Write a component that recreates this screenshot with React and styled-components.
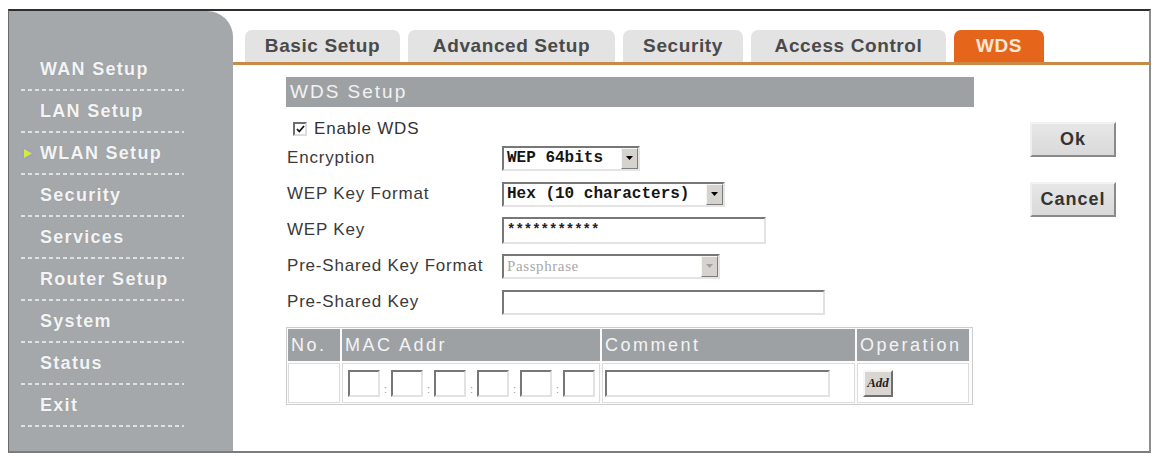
import React from 'react';
import styled, { createGlobalStyle } from 'styled-components';

const GlobalStyle = createGlobalStyle`
  html, body { margin: 0; padding: 0; background: #fff; }
  body { font-family: "Liberation Sans", Arial, sans-serif; }
`;

const Frame = styled.div`
  box-sizing: border-box;
  margin: 9px 0 0 8px;
  width: 1143px;
  height: 444px;
  display: flex;
  background: #fff;
  border-top: 2px solid #2e2e2e;
  border-left: 1px solid #6a6a6a;
  border-right: 2px solid #8e8e8e;
  border-bottom: 2px solid #7c7c7c;
`;

/* ---------- left menu ---------- */
const Sidebar = styled.nav`
  box-sizing: border-box;
  flex: none;
  width: 224px;
  padding-top: 38px;
  background: #a5a8ab;
  border-top-right-radius: 26px;
`;

const NavItem = styled.div`
  box-sizing: border-box;
  display: flex;
  align-items: center;
  margin-left: 12px;
  width: 163px;
  height: 42px;
  padding-bottom: 2px;
  background: repeating-linear-gradient(90deg, rgba(232, 234, 236, 0.85) 0 4px, transparent 4px 7px)
    left bottom / 100% 2px no-repeat;
`;

const MarkerSlot = styled.span`
  flex: none;
  width: 19px;
  display: flex;
  align-items: center;
  padding-left: 3px;
  box-sizing: border-box;
`;

const NavText = styled.span`
  font-size: 18px;
  font-weight: bold;
  letter-spacing: 1.3px;
  color: #f3f4f5;
  white-space: nowrap;
  text-shadow: 0 0 1px rgba(120, 120, 120, 0.5);
`;

/* ---------- tabs ---------- */
const Main = styled.div`
  flex: 1;
  display: flex;
  flex-direction: column;
  min-width: 0;
`;

const TabBar = styled.div`
  display: flex;
  align-items: flex-end;
  gap: 8px;
  padding: 19px 0 0 12px;
  border-bottom: 3px solid #c98a46;
`;

const Tab = styled.div`
  flex: none;
  width: ${(p) => p.$w}px;
  height: 32px;
  display: flex;
  align-items: center;
  justify-content: center;
  border-radius: 7px 7px 0 0;
  background: ${(p) => (p.$active ? '#e5661b' : '#e3e3e3')};
  color: ${(p) => (p.$active ? '#fbe6d8' : '#4a4a4a')};
  font-size: 19px;
  font-weight: bold;
  letter-spacing: 0.6px;
  white-space: nowrap;
`;

/* ---------- content ---------- */
const Content = styled.div`
  display: flex;
  padding: 12px 0 0 53px;
`;

const FormColumn = styled.div`
  flex: none;
  width: 688px;
  display: flex;
  flex-direction: column;
`;

const SectionHeader = styled.div`
  height: 30px;
  line-height: 30px;
  padding-left: 4px;
  background: #9ea1a4;
  color: #f1f2f3;
  font-size: 19px;
  letter-spacing: 2px;
`;

const EnableRow = styled.label`
  display: flex;
  align-items: center;
  gap: 7px;
  height: 22px;
  margin-top: 11px;
  padding-left: 7px;
  font-size: 17px;
  letter-spacing: 0.8px;
  color: #333;
`;

const CheckBox = styled.span`
  box-sizing: border-box;
  width: 14px;
  height: 14px;
  display: flex;
  align-items: center;
  justify-content: center;
  background: #fff;
  border: 2px solid;
  border-color: #6e6e6e #dcdcdc #dcdcdc #6e6e6e;
`;

const FormRow = styled.div`
  display: flex;
  align-items: center;
  height: 36px;
`;

const Label = styled.span`
  flex: none;
  width: 216px;
  padding-left: 1px;
  box-sizing: border-box;
  font-size: 17px;
  letter-spacing: 0.8px;
  color: #3a3a3a;
  white-space: nowrap;
`;

const SelectBox = styled.div`
  box-sizing: border-box;
  width: ${(p) => p.$w}px;
  height: 25px;
  display: flex;
  align-items: stretch;
  background: #fff;
  border: 2px solid;
  border-color: #777 #e4e4e4 #e4e4e4 #777;
`;

const SelectText = styled.span`
  flex: 1;
  padding-left: 3px;
  line-height: 21px;
  white-space: nowrap;
  overflow: hidden;
  font-family: ${(p) => (p.$disabled ? '"Liberation Serif", serif' : '"Liberation Mono", monospace')};
  font-size: ${(p) => (p.$disabled ? 15 : 16)}px;
  font-weight: ${(p) => (p.$disabled ? 'normal' : 'bold')};
  letter-spacing: ${(p) => (p.$disabled ? 0.6 : 0)}px;
  color: ${(p) => (p.$disabled ? '#a8a8a8' : '#151515')};
`;

const ArrowButton = styled.span`
  box-sizing: border-box;
  flex: none;
  width: 17px;
  display: flex;
  align-items: center;
  justify-content: center;
  background: #d6d3ce;
  border: 1px solid;
  border-color: #f6f6f6 #7d7d7d #7d7d7d #f6f6f6;
`;

const TextInput = styled.input`
  box-sizing: border-box;
  width: ${(p) => p.$w}px;
  height: ${(p) => p.$h || 27}px;
  margin: 0;
  padding: 0 3px;
  background: #fff;
  border: 2px solid;
  border-color: #777 #e2e2e2 #e2e2e2 #777;
  border-radius: 0;
  outline: none;
  font-family: "Liberation Mono", monospace;
  font-size: 14px;
  font-weight: bold;
  color: #222;
`;

/* ---------- WDS peer table ---------- */
const Table = styled.div`
  display: grid;
  grid-template-columns: 52px 258px 253px 112px;
  grid-template-rows: 32px 40px;
  gap: 2px;
  width: 687px;
  box-sizing: border-box;
  margin-top: 7px;
  padding: 1px;
  background: #fbfbfb;
  border: 1px solid #cdcdcd;
`;

const HeadCell = styled.div`
  background: #9ea1a4;
  color: #f3f4f5;
  font-size: 18px;
  letter-spacing: 2.5px;
  line-height: 32px;
  padding-left: 3px;
  white-space: nowrap;
  overflow: hidden;
`;

const BodyCell = styled.div`
  display: flex;
  align-items: center;
  padding-left: ${(p) => p.$pad || 0}px;
  background: #fff;
  box-shadow: inset 0 0 0 1px #dcdcdc;
`;

const MacBox = styled(TextInput)`
  width: 32px;
`;

const MacSep = styled.span`
  width: 11px;
  align-self: flex-end;
  margin-bottom: 8px;
  text-align: center;
  font-size: 11px;
  line-height: 11px;
  color: #9a9a9a;
`;

const SmallButton = styled.button`
  box-sizing: border-box;
  width: 30px;
  height: 27px;
  padding: 0;
  background: #d9d6d1;
  border: 2px solid;
  border-color: #f7f7f7 #6f6f6f #6f6f6f #f7f7f7;
  font-family: "Liberation Serif", serif;
  font-size: 13px;
  font-weight: bold;
  font-style: italic;
  color: #222;
`;

/* ---------- Ok / Cancel ---------- */
const ButtonColumn = styled.div`
  display: flex;
  flex-direction: column;
  gap: 25px;
  margin-left: 56px;
  padding-top: 45px;
`;

const ActionButton = styled.button`
  box-sizing: border-box;
  width: 86px;
  height: 35px;
  padding: 0;
  background: linear-gradient(#e7e7e7, #d9d9d9);
  border: 2px solid;
  border-color: #f3f3f3 #8a8a8a #8a8a8a #efefef;
  font-family: "Liberation Sans", Arial, sans-serif;
  font-size: 18px;
  font-weight: bold;
  letter-spacing: 1px;
  color: #333;
`;

const navItems = [
  'WAN Setup',
  'LAN Setup',
  'WLAN Setup',
  'Security',
  'Services',
  'Router Setup',
  'System',
  'Status',
  'Exit',
];

const tabs = [
  { label: 'Basic Setup', w: 155 },
  { label: 'Advanced Setup', w: 207 },
  { label: 'Security', w: 120 },
  { label: 'Access Control', w: 195 },
  { label: 'WDS', w: 90, active: true },
];

const Marker = () => (
  <svg width="8" height="9" viewBox="0 0 8 9" style={{ filter: 'drop-shadow(0 0 2px #8d8cf0)' }}>
    <polygon points="0,0 8,4.5 0,9" fill="#d6ea3c" />
  </svg>
);

const DownArrow = ({ color = '#000' }) => (
  <svg width="7" height="4" viewBox="0 0 7 4">
    <polygon points="0,0 7,0 3.5,4" fill={color} />
  </svg>
);

const Select = ({ w, value, disabled }) => (
  <SelectBox $w={w}>
    <SelectText $disabled={disabled}>{value}</SelectText>
    <ArrowButton>
      <DownArrow color={disabled ? '#a0a0a0' : '#000'} />
    </ArrowButton>
  </SelectBox>
);

export default function App() {
  return (
    <>
      <GlobalStyle />
      <Frame>
        <Sidebar>
          {navItems.map((item) => (
            <NavItem key={item}>
              <MarkerSlot>{item === 'WLAN Setup' && <Marker />}</MarkerSlot>
              <NavText>{item}</NavText>
            </NavItem>
          ))}
        </Sidebar>

        <Main>
          <TabBar>
            {tabs.map((t) => (
              <Tab key={t.label} $w={t.w} $active={t.active}>
                {t.label}
              </Tab>
            ))}
          </TabBar>

          <Content>
            <FormColumn>
              <SectionHeader>WDS Setup</SectionHeader>

              <EnableRow>
                <CheckBox>
                  <svg width="9" height="8" viewBox="0 0 9 8">
                    <path d="M1 4 L3.3 6.5 L8 1" fill="none" stroke="#111" strokeWidth="1.8" />
                  </svg>
                </CheckBox>
                Enable WDS
              </EnableRow>

              <FormRow>
                <Label>Encryption</Label>
                <Select w={138} value="WEP 64bits" />
              </FormRow>
              <FormRow>
                <Label>WEP Key Format</Label>
                <Select w={223} value="Hex (10 characters)" />
              </FormRow>
              <FormRow>
                <Label>WEP Key</Label>
                <TextInput $w={264} readOnly value="***********" />
              </FormRow>
              <FormRow>
                <Label>Pre-Shared Key Format</Label>
                <Select w={218} value="Passphrase" disabled />
              </FormRow>
              <FormRow>
                <Label>Pre-Shared Key</Label>
                <TextInput $w={323} $h={25} readOnly value="" />
              </FormRow>

              <Table>
                <HeadCell>No.</HeadCell>
                <HeadCell>MAC Addr</HeadCell>
                <HeadCell>Comment</HeadCell>
                <HeadCell>Operation</HeadCell>

                <BodyCell />
                <BodyCell $pad={6}>
                  {[0, 1, 2, 3, 4, 5].map((i) => (
                    <React.Fragment key={i}>
                      {i > 0 && <MacSep>:</MacSep>}
                      <MacBox readOnly value="" />
                    </React.Fragment>
                  ))}
                </BodyCell>
                <BodyCell $pad={3}>
                  <TextInput $w={225} readOnly value="" />
                </BodyCell>
                <BodyCell $pad={6}>
                  <SmallButton>Add</SmallButton>
                </BodyCell>
              </Table>
            </FormColumn>

            <ButtonColumn>
              <ActionButton>Ok</ActionButton>
              <ActionButton>Cancel</ActionButton>
            </ButtonColumn>
          </Content>
        </Main>
      </Frame>
    </>
  );
}
